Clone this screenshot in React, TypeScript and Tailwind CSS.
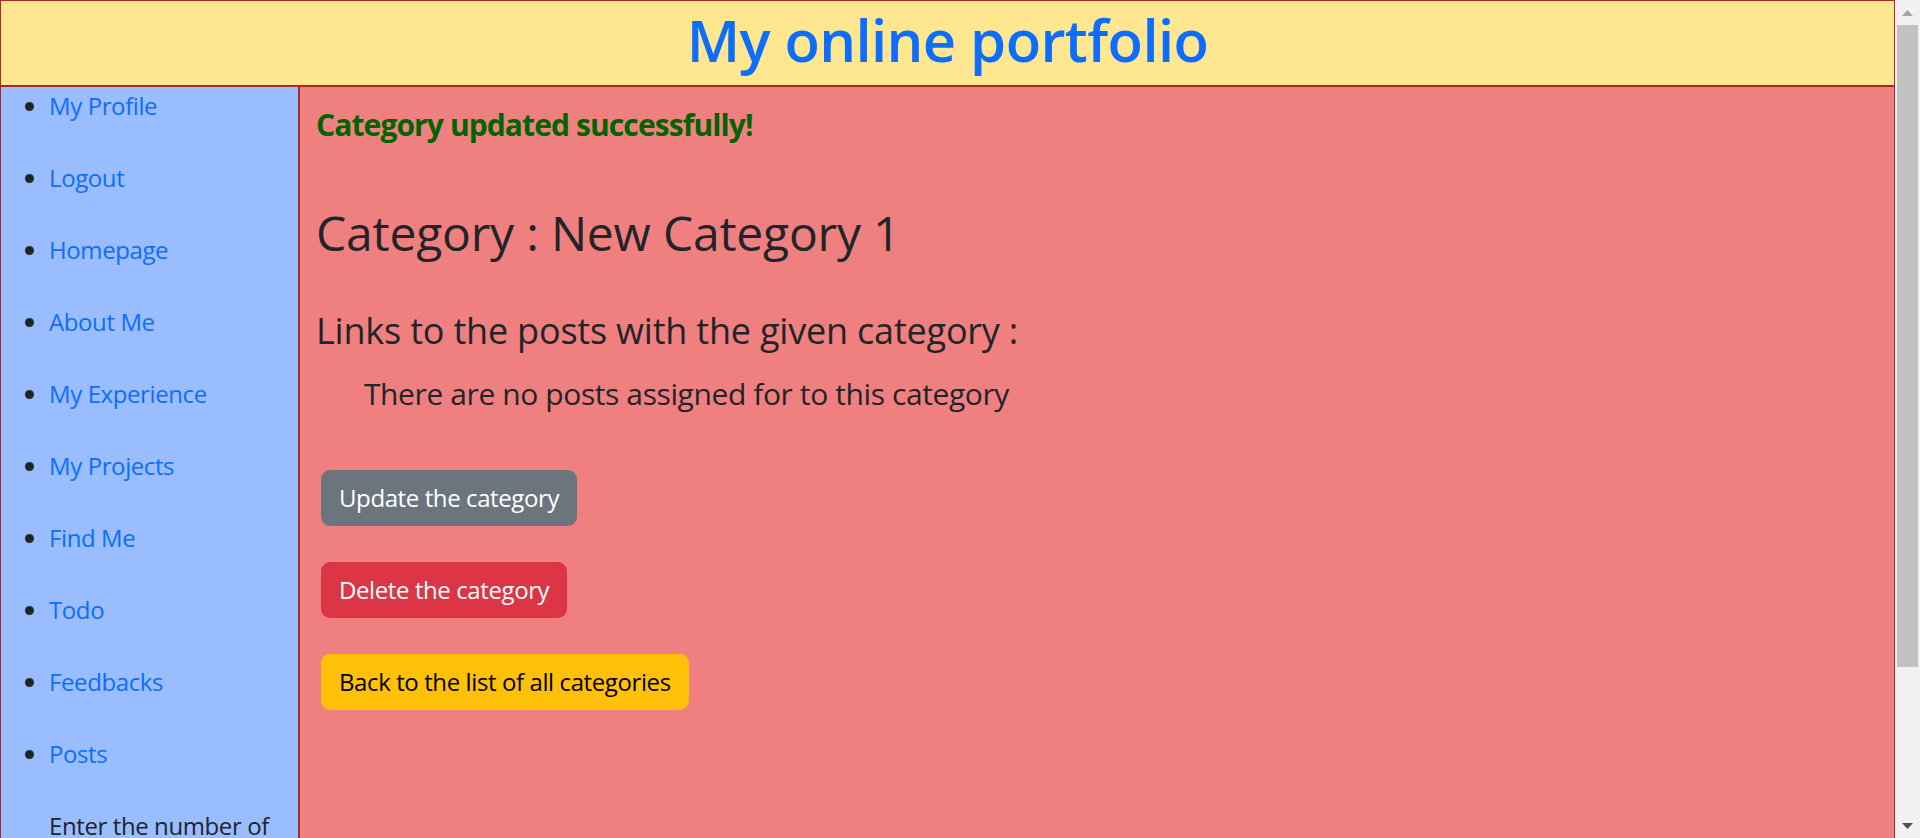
const links = [
  'My Profile',
  'Logout',
  'Homepage',
  'About Me',
  'My Experience',
  'My Projects',
  'Find Me',
  'Todo',
  'Feedbacks',
  'Posts',
];

function Scrollbar() {
  return (
    <div className="w-[25px] h-full bg-[#f1f1f1] flex flex-col shrink-0">
      <div className="h-[25px] flex items-center justify-center">
        <svg width="11" height="6" viewBox="0 0 11 6">
          <polygon points="0,6 11,6 5.5,0" fill="#a3a3a3" />
        </svg>
      </div>
      <div className="mx-[2px] h-[642px] bg-[#c1c1c1]" />
      <div className="flex-1" />
      <div className="h-[25px] flex items-center justify-center">
        <svg width="11" height="6" viewBox="0 0 11 6">
          <polygon points="0,0 11,0 5.5,6" fill="#505050" />
        </svg>
      </div>
    </div>
  );
}

export default function App() {
  return (
    <div
      className="w-[1920px] h-[838px] overflow-hidden flex text-[#212529]"
      style={{ fontFamily: '"Open Sans", sans-serif' }}
    >
      <div className="w-[1895px] h-full flex flex-col">
        <header className="h-[86px] shrink-0 border border-[#a52a2a] bg-[#ffe690] flex items-center justify-center pb-[6px]">
          <h1 className="text-[58px] leading-[72px] font-semibold tracking-[-0.6px] text-[#0d6efd]">
            My online portfolio
          </h1>
        </header>

        <div className="flex flex-1">
          <nav className="w-[299px] shrink-0 border border-[#a52a2a] bg-[#99bdfe]">
            <ul className="list-disc pl-[48px] pt-[1px] text-[24px] leading-[36px] tracking-[-0.4px]">
              {links.map((l) => (
                <li key={l} className="mb-[36px]">
                  <a href="#" className="text-[#0d6efd]">{l}</a>
                </li>
              ))}
              <li className="list-none">Enter the number of</li>
            </ul>
          </nav>

          <main className="flex-1 border border-[#a52a2a] bg-[#f08080] px-[16px] flex flex-col items-start">
            <h5 className="mt-[20px] text-[30px] leading-[36px] font-bold tracking-[-0.9px] text-[#006400]">
              Category updated successfully!
            </h5>
            <h2 className="mt-[61px] text-[48px] leading-[58px] font-medium tracking-[-0.2px]">
              Category : New Category 1
            </h2>
            <h4 className="mt-[47px] text-[36px] leading-[43px] font-medium tracking-[-0.2px]">
              Links to the posts with the given category :
            </h4>
            <h5 className="mt-[24px] ml-[48px] text-[30px] leading-[36px] font-medium tracking-[-0.4px]">
              There are no posts assigned for to this category
            </h5>

            <div className="mt-[58px] ml-[5px] flex flex-col items-start gap-[36px] text-[24px] leading-[36px] tracking-[-0.4px]">
              <button className="h-[56px] px-[18px] rounded-[9px] bg-[#6c757d] text-white">
                Update the category
              </button>
              <button className="h-[56px] px-[18px] rounded-[9px] bg-[#dc3545] text-white">
                Delete the category
              </button>
              <button className="h-[56px] px-[18px] rounded-[9px] bg-[#ffc107] text-black">
                Back to the list of all categories
              </button>
            </div>
          </main>
        </div>
      </div>
      <Scrollbar />
    </div>
  );
}
